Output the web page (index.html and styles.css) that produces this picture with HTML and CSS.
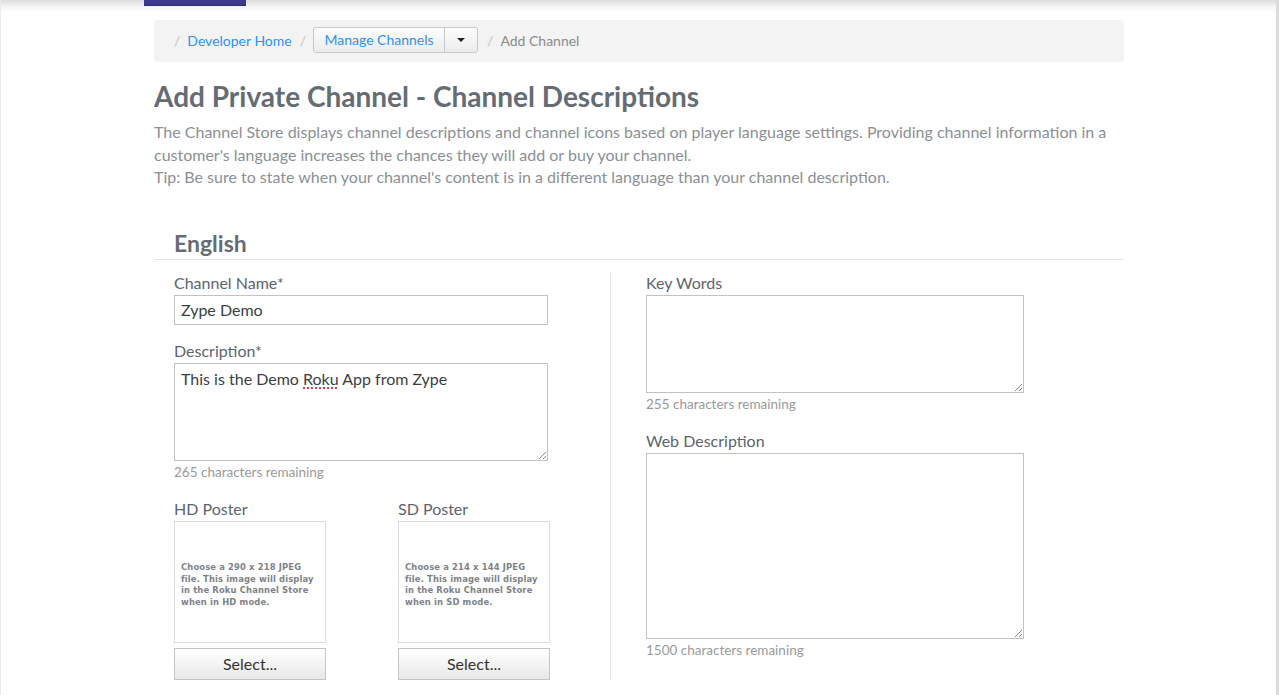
FILE: index.html
```html
<!DOCTYPE html>
<html>
<head>
<meta charset="utf-8">
<link rel="stylesheet" href="styles.css">
</head>
<body>
<div class="frame">
  <div class="header"><div class="brand-tab"></div></div>
  <div class="main">
    <div class="breadcrumb">
      <span class="sep">/</span>
      <a class="crumb-link">Developer Home</a>
      <span class="sep">/</span>
      <div class="split-btn">
        <span class="split-main">Manage Channels</span>
        <span class="split-caret"><span class="caret"></span></span>
      </div>
      <span class="sep">/</span>
      <span class="crumb-current">Add Channel</span>
    </div>

    <h1 class="title">Add Private Channel - Channel Descriptions</h1>
    <p class="intro">The Channel Store displays channel descriptions and channel icons based on player language settings. Providing channel information in a customer's language increases the chances they will add or buy your channel.<br>Tip: Be sure to state when your channel's content is in a different language than your channel description.</p>

    <h2 class="lang">English</h2>

    <div class="form">
      <div class="col-left">
        <label class="label">Channel Name*</label>
        <div class="input">Zype Demo</div>

        <label class="label gap">Description*</label>
        <div class="textarea ta-desc"><span>This is the Demo <span class="spell">Roku</span> App from Zype</span><span class="grip"></span></div>
        <div class="hint">265 characters remaining</div>

        <div class="posters">
          <div class="poster">
            <label class="label">HD Poster</label>
            <div class="poster-box"><p>Choose a 290 x 218 JPEG file. This image will display in the Roku Channel Store when in HD mode.</p></div>
            <div class="select-btn">Select...</div>
          </div>
          <div class="poster">
            <label class="label">SD Poster</label>
            <div class="poster-box"><p>Choose a 214 x 144 JPEG file. This image will display in the Roku Channel Store when in SD mode.</p></div>
            <div class="select-btn">Select...</div>
          </div>
        </div>
      </div>

      <div class="col-right">
        <label class="label">Key Words</label>
        <div class="textarea ta-key"><span class="grip"></span></div>
        <div class="hint">255 characters remaining</div>

        <label class="label gap2">Web Description</label>
        <div class="textarea ta-web"><span class="grip"></span></div>
        <div class="hint">1500 characters remaining</div>
      </div>
    </div>
  </div>
</div>
</body>
</html>
```

FILE: styles.css
```css
html, body {
  margin: 0;
  padding: 0;
  background: #fff;
}
body {
  font-family: "Lato", "Liberation Sans", sans-serif;
  color: #5d646d;
}
.frame {
  height: 695px;
  box-sizing: border-box;
  border-left: 1px solid #ececec;
  border-right: 3px solid #dcdcdc;
  overflow: hidden;
}
.header {
  height: 12px;
  background: linear-gradient(#dcdcdc, #f4f4f4 55%, #fff);
  display: flex;
}
.brand-tab {
  margin-left: 143px;
  width: 102px;
  height: 5px;
  background: #3c3a8c;
  border-bottom: 1px solid #2e2d70;
}
.main {
  margin-left: 153px;
  width: 970px;
}
.breadcrumb {
  margin-top: 8px;
  height: 42px;
  box-sizing: border-box;
  padding-bottom: 2px;
  background: #f3f3f3;
  border-radius: 4px;
  display: flex;
  align-items: center;
  padding-left: 20px;
  font-size: 14px;
}
.sep {
  color: #c4c4c4;
  margin-right: 7px;
}
.crumb-link {
  color: #3092f0;
  margin-right: 8px;
}
.split-btn {
  display: flex;
  height: 26px;
  box-sizing: border-box;
  border: 1px solid #c8c8c8;
  border-radius: 3px;
  background: linear-gradient(#fdfdfd, #ececec);
  margin-right: 9px;
  margin-left: 0;
}
.split-main {
  color: #3092f0;
  width: 130px;
  display: flex;
  align-items: center;
  justify-content: center;
  border-right: 1px solid #c8c8c8;
  padding-bottom: 1px;
}
.split-caret {
  width: 32px;
  display: flex;
  align-items: center;
  justify-content: center;
}
.caret {
  width: 0;
  height: 0;
  border-left: 4px solid transparent;
  border-right: 4px solid transparent;
  border-top: 4px solid #222;
}
.crumb-current {
  color: #8b8b8b;
}
.title {
  margin: 18px 0 0;
  font-size: 28px;
  font-weight: 700;
  color: #656c74;
  line-height: 32px;
}
.intro {
  margin: 9px 0 0;
  font-size: 16px;
  line-height: 22.5px;
  color: #8b9096;
  width: 972px;
}
.lang {
  margin: 40px 0 0;
  padding: 0 0 2px 20px;
  font-size: 23px;
  line-height: 28px;
  font-weight: 700;
  color: #656c74;
  border-bottom: 1px solid #e6e6e6;
}
.form {
  display: flex;
  margin-top: 12px;
}
.col-left {
  padding-left: 20px;
  width: 436px;
  border-right: 1px solid #e8e8e8;
  padding-bottom: 0;
}
.col-right {
  padding-left: 35px;
}
.label {
  display: block;
  font-size: 16px;
  line-height: 22px;
  margin-bottom: 1px;
  color: #5d646d;
}
.gap { margin-top: 15px; }
.gap2 { margin-top: 17px; }
.input {
  width: 374px;
  height: 30px;
  box-sizing: border-box;
  border: 1px solid #c2c2c2;
  padding: 0 6px;
  font-size: 16px;
  line-height: 28px;
  color: #3a3f45;
}
.textarea {
  position: relative;
  box-sizing: border-box;
  border: 1px solid #c2c2c2;
  padding: 4px 6px;
  font-size: 16px;
  line-height: 22px;
  color: #3a3f45;
}
.ta-desc { width: 374px; height: 98px; }
.ta-key { width: 378px; height: 98px; }
.ta-web { width: 378px; height: 186px; }
.spell {
  text-decoration: underline dotted #e04040;
  text-decoration-thickness: 2px;
  text-underline-offset: 3px;
}
.grip {
  position: absolute;
  right: 1px;
  bottom: 1px;
  width: 7px;
  height: 7px;
  background: linear-gradient(135deg, transparent 45%, #888 45%, #888 55%, transparent 55%, transparent 72%, #888 72%, #888 82%, transparent 82%);
}
.hint {
  font-size: 13.5px;
  line-height: 18px;
  color: #9a9a9a;
  margin-top: 2px;
}
.posters {
  display: flex;
  gap: 72px;
  margin-top: 17px;
}
.poster {
  width: 152px;
}
.poster-box {
  height: 122px;
  box-sizing: border-box;
  border: 1px solid #dcdcdc;
  display: flex;
  align-items: center;
  padding: 0 6px;
}
.poster-box p {
  margin: 0;
  font-family: "DejaVu Sans", sans-serif;
  font-size: 8.4px;
  letter-spacing: 0.15px;
  line-height: 11.5px;
  font-weight: 700;
  color: #7e8288;
  padding-top: 7px;
}
.select-btn {
  margin-top: 5px;
  height: 32px;
  box-sizing: border-box;
  border: 1px solid #c4c4c4;
  background: linear-gradient(#ffffff, #e8e8e8);
  font-size: 16px;
  line-height: 30px;
  text-align: center;
  color: #333;
}
```
